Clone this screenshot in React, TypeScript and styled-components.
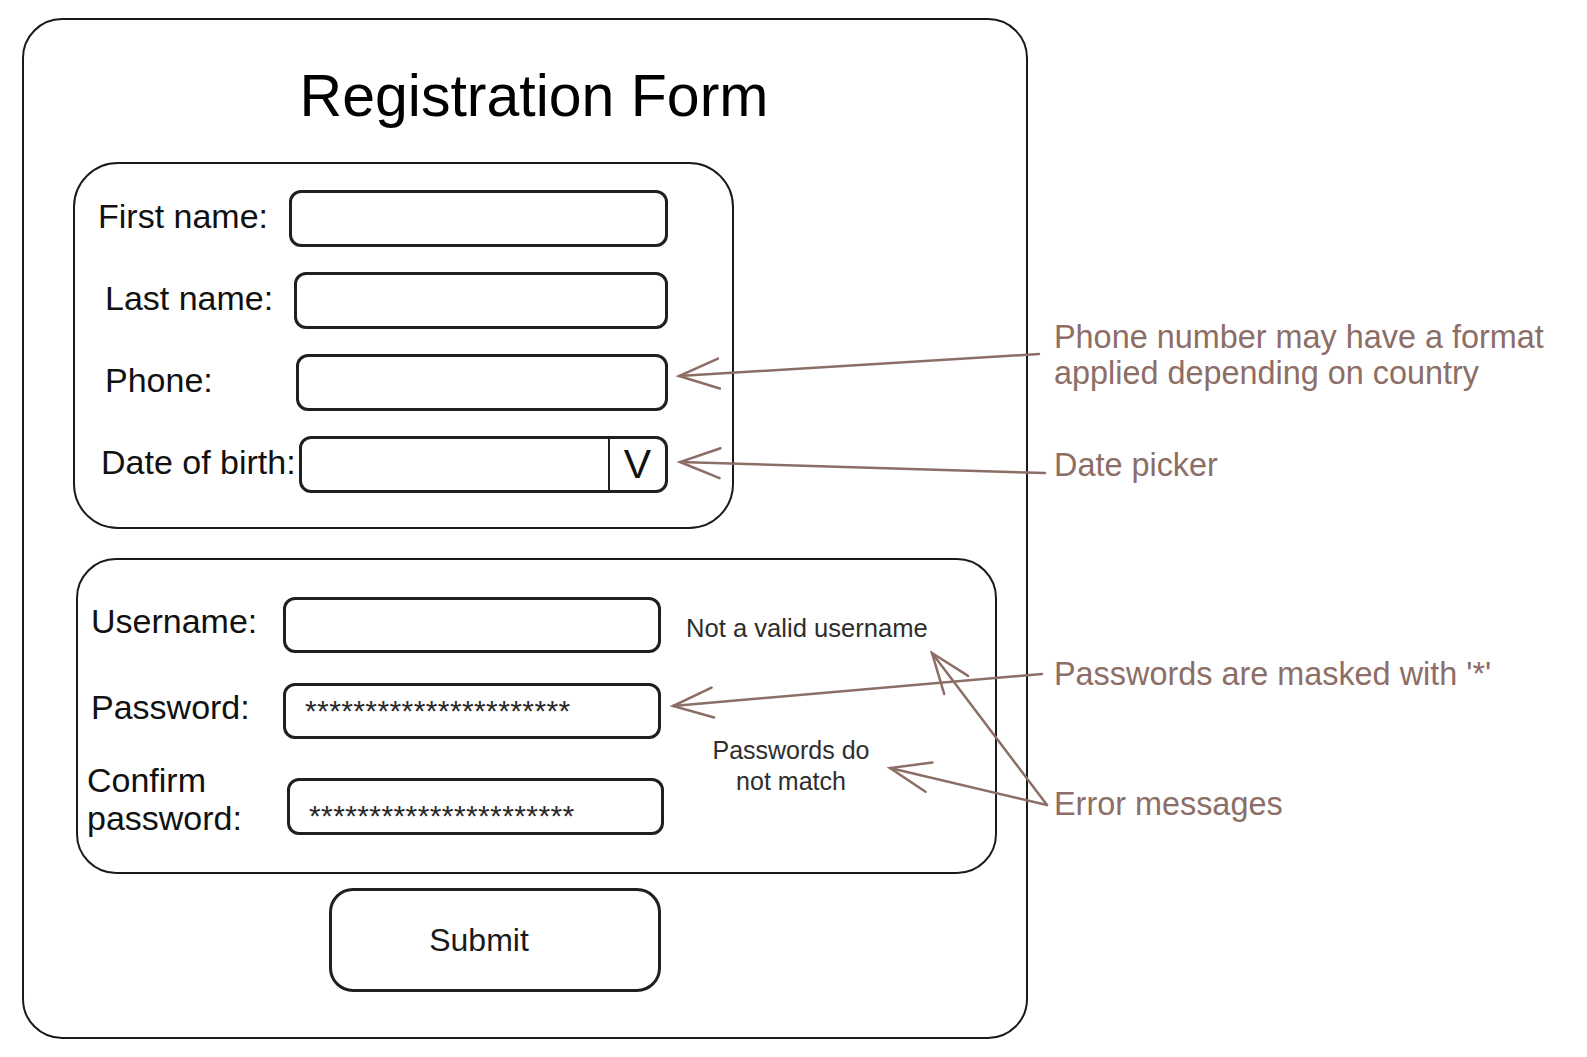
import styled, { createGlobalStyle } from "styled-components";

const GlobalStyle = createGlobalStyle`
  * {
    box-sizing: border-box;
  }

  body {
    margin: 0;
    background: #ffffff;
    font-family: "Liberation Sans", Arial, sans-serif;
    color: #111111;
  }
`;

const NOTE_COLOR = "#8c6e66";

// arrows of the annotation layer: tail at the note, tip at the field
const ARROWS = [
  { from: [1039, 354], to: [679, 376] },
  { from: [1045, 473], to: [680, 462] },
  { from: [1042, 674], to: [673, 706] },
  { from: [1047, 805], to: [932, 653] },
  { from: [1047, 805], to: [890, 768] },
];

const arrowHead = (from: number[], to: number[]): string => {
  const dx = from[0] - to[0];
  const dy = from[1] - to[1];
  const len = Math.hypot(dx, dy);
  const ux = dx / len;
  const uy = dy / len;
  const bx = to[0] + ux * 40;
  const by = to[1] + uy * 40;
  const px = -uy * 15;
  const py = ux * 15;
  return `M${bx + px},${by + py} L${to[0]},${to[1]} L${bx - px},${by - py}`;
};

const Page = styled.div`
  position: relative;
  display: flex;
  align-items: flex-start;
  width: 1587px;
  min-height: 1057px;
`;

const Card = styled.div`
  width: 1006px;
  height: 1021px;
  margin: 18px 0 0 22px;
  padding-top: 47px;
  border: 2px solid #1a1a1a;
  border-radius: 40px;
  display: flex;
  flex-direction: column;
  align-items: flex-start;
`;

const Title = styled.h1`
  align-self: stretch;
  margin: 0;
  padding-left: 18px;
  font-size: 59px;
  line-height: 59px;
  font-weight: normal;
  text-align: center;
  color: #000000;
`;

const PersonalBox = styled.div`
  width: 661px;
  height: 367px;
  margin: 36px 0 0 49px;
  padding: 26px 64px 0 0;
  border: 2px solid #1a1a1a;
  border-radius: 45px;
  display: flex;
  flex-direction: column;
  gap: 25px;
`;

const Row = styled.div`
  display: flex;
  align-items: center;
`;

const Label = styled.div<{ $pad: number; $width?: number }>`
  flex: none;
  width: ${(p) => (p.$width ? `${p.$width}px` : "auto")};
  padding-left: ${(p) => p.$pad}px;
  margin-bottom: 6px;
  font-size: 34px;
  line-height: 38px;
  white-space: nowrap;
  align-self: center;
`;

const Field = styled.div<{ $height?: number }>`
  flex: 1;
  height: ${(p) => p.$height ?? 57}px;
  border: 3px solid #1f1f1f;
  border-radius: 12px;
  background: #ffffff;
  display: flex;
  align-items: center;
  overflow: hidden;
`;

const DateBlank = styled.div`
  flex: 1;
  align-self: stretch;
`;

const DateToggle = styled.div`
  flex: none;
  width: 57px;
  align-self: stretch;
  border-left: 2px solid #1f1f1f;
  display: flex;
  align-items: center;
  justify-content: center;
  font-size: 41px;
  line-height: 1;
  color: #111111;
`;

const AccountBox = styled.div`
  width: 921px;
  height: 316px;
  margin: 29px 0 0 52px;
  padding-top: 37px;
  border: 2px solid #1a1a1a;
  border-radius: 40px;
  display: grid;
  grid-template-columns: 205px 378px 1fr;
  grid-template-rows: 56px 56px 76px;
  row-gap: 30px;
`;

const GridLabel = styled(Label)<{ $row: number }>`
  grid-column: 1;
  grid-row: ${(p) => p.$row};
  margin-bottom: 8px;
`;

const TwoLineLabel = styled.div`
  grid-column: 1;
  grid-row: 3;
  align-self: start;
  margin-top: -8px;
  padding-left: 9px;
  font-size: 34px;
  line-height: 38px;
`;

const GridField = styled(Field)<{ $row: number; $nudge?: boolean }>`
  grid-column: 2;
  grid-row: ${(p) => p.$row};
  align-self: ${(p) => (p.$nudge ? "end" : "stretch")};
  height: ${(p) => (p.$nudge ? "57px" : "auto")};
  margin: ${(p) => (p.$nudge ? "0 -3px 10px 4px" : "0")};
`;

const Masked = styled.span<{ $drop?: number }>`
  padding-left: 19px;
  margin-top: ${(p) => p.$drop ?? 0}px;
  font-size: 30px;
  letter-spacing: 0.4px;
  color: #2a2a2a;
  white-space: nowrap;
`;

const ErrorText = styled.div`
  grid-column: 3;
  grid-row: 1;
  align-self: center;
  margin: 6px 0 0 25px;
  font-size: 25.6px;
  line-height: 30px;
  color: #2e2e2e;
  white-space: nowrap;
`;

const ErrorBlock = styled.div`
  grid-column: 3;
  grid-row: 2 / span 2;
  align-self: start;
  width: 210px;
  margin: 52px 0 0 25px;
  font-size: 25px;
  line-height: 31px;
  text-align: center;
  color: #2e2e2e;
`;

const SubmitButton = styled.button`
  width: 332px;
  height: 104px;
  margin: 14px 0 0 305px;
  padding: 0 32px 0 0;
  border: 3px solid #1f1f1f;
  border-radius: 24px;
  background: #ffffff;
  font-family: "Liberation Sans", Arial, sans-serif;
  font-size: 32px;
  color: #1a1a1a;
  cursor: pointer;
`;

const Notes = styled.div`
  display: flex;
  flex-direction: column;
  align-items: flex-start;
  margin-left: 26px;
  padding-top: 319px;
`;

const Note = styled.div<{ $gap: number }>`
  margin-top: ${(p) => p.$gap}px;
  font-size: 32.4px;
  line-height: 36px;
  color: ${NOTE_COLOR};
  white-space: nowrap;
`;

const ArrowLayer = styled.svg`
  position: absolute;
  top: 0;
  left: 0;
  pointer-events: none;
`;

const STARS = "*".repeat(22);

export default function App() {
  return (
    <Page>
      <GlobalStyle />
      <Card>
        <Title>Registration Form</Title>

        <PersonalBox>
          <Row>
            <Label $pad={23} $width={214}>First name:</Label>
            <Field />
          </Row>
          <Row>
            <Label $pad={30} $width={219}>Last name:</Label>
            <Field />
          </Row>
          <Row>
            <Label $pad={30} $width={221}>Phone:</Label>
            <Field />
          </Row>
          <Row>
            <Label $pad={26} $width={224}>Date of birth:</Label>
            <Field>
              <DateBlank />
              <DateToggle>V</DateToggle>
            </Field>
          </Row>
        </PersonalBox>

        <AccountBox>
          <GridLabel $row={1} $pad={13}>Username:</GridLabel>
          <GridField $row={1} />
          <ErrorText>Not a valid username</ErrorText>

          <GridLabel $row={2} $pad={13}>Password:</GridLabel>
          <GridField $row={2}>
            <Masked>{STARS}</Masked>
          </GridField>

          <TwoLineLabel>
            Confirm
            <br />
            password:
          </TwoLineLabel>
          <GridField $row={3} $nudge>
            <Masked $drop={18}>{STARS}</Masked>
          </GridField>
          <ErrorBlock>
            Passwords do
            <br />
            not match
          </ErrorBlock>
        </AccountBox>

        <SubmitButton type="button">Submit</SubmitButton>
      </Card>

      <Notes>
        <Note $gap={0}>
          Phone number may have a format
          <br />
          applied depending on country
        </Note>
        <Note $gap={56}>Date picker</Note>
        <Note $gap={173}>Passwords are masked with '*'</Note>
        <Note $gap={94}>Error messages</Note>
      </Notes>

      <ArrowLayer width={1587} height={1057}>
        {ARROWS.map((a, i) => (
          <g key={i} fill="none" stroke={NOTE_COLOR} strokeWidth={2.5} strokeLinecap="round">
            <line x1={a.from[0]} y1={a.from[1]} x2={a.to[0]} y2={a.to[1]} />
            <path d={arrowHead(a.from, a.to)} />
          </g>
        ))}
      </ArrowLayer>
    </Page>
  );
}
